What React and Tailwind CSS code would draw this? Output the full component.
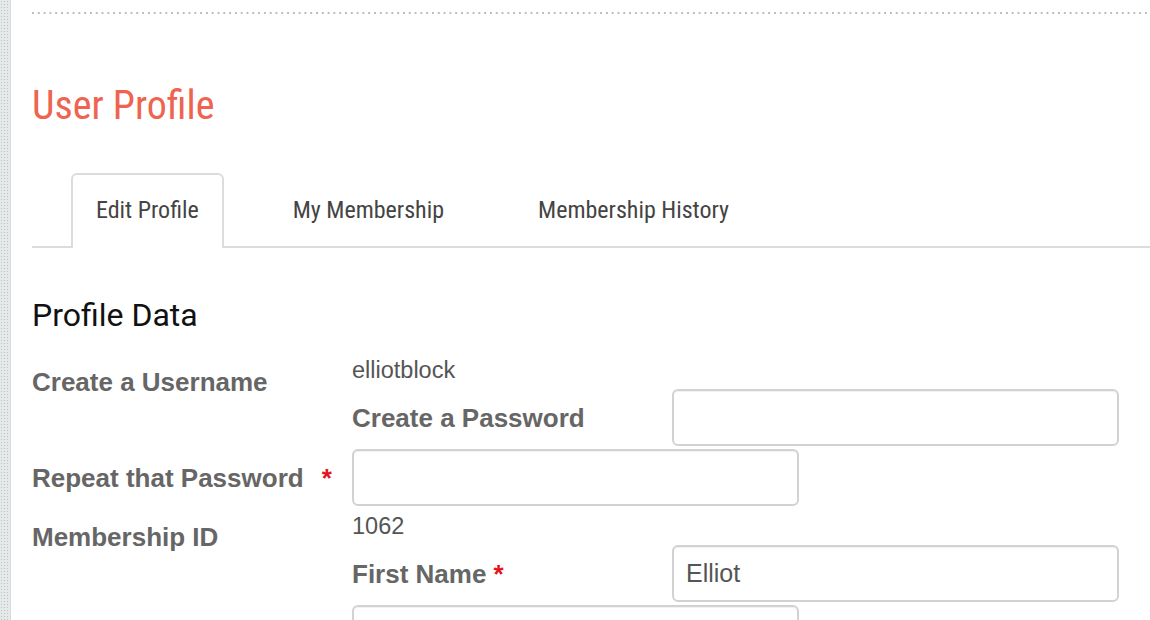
import React from "react";

const labelCls = "text-[26px] font-bold leading-[30px] text-[#666]";
const inputCls =
  "w-[447px] h-[57px] shrink-0 rounded-[6px] border-2 border-[#d2d2d2] bg-white px-[12px] text-[25px] text-[#555] outline-none shadow-[inset_0_1px_1px_rgba(0,0,0,0.06)]";

function Req({ className = "" }) {
  return <span className={"text-[#e4141b] " + className}>*</span>;
}

function Tab({ label, active }) {
  return (
    <div
      className={
        "h-[75px] -mb-[2px] px-[23px] pb-[3px] flex items-center border-2 border-b-0 rounded-t-[6px] text-[24px] text-[#444] " +
        (active ? "border-[#dcdcdc] bg-white" : "border-transparent")
      }
    >
      {label}
    </div>
  );
}

export default function App() {
  return (
    <div
      className="min-h-[620px] flex bg-white"
      style={{ fontFamily: '"Liberation Sans", Arial, sans-serif' }}
    >
      <div className="w-[11px] shrink-0 bg-[#e4e9e9] bg-[radial-gradient(#b9c1c1_0.9px,transparent_1px)] bg-[length:3px_3px] border-r border-[#d6dbdb]" />

      <div className="flex-1 pl-[21px] pt-[12px]">
        <div className="h-[2px] bg-[linear-gradient(to_right,#bcbcbc_2px,transparent_2px)] bg-[length:5.8px_2px]" />

        <h1 className="mt-[72px] text-[40px] leading-[40px] text-[#ee6450] font-['Roboto_Condensed',Roboto,sans-serif]">
          User Profile
        </h1>

        <div className="mt-[47px] flex items-end gap-[44px] pl-[39px] border-b-2 border-[#dcdcdc] font-['Roboto_Condensed',Roboto,sans-serif]">
          <Tab label="Edit Profile" active />
          <Tab label="My Membership" />
          <Tab label="Membership History" />
        </div>

        <h2 className="mt-[47px] text-[32px] leading-[40px] text-[#111] font-['Roboto',sans-serif]">
          Profile Data
        </h2>

        <form className="mt-[22px]">
          <div className="flex">
            <div className={"w-[320px] shrink-0 pt-[10px] " + labelCls}>
              Create a Username
            </div>
            <div className="flex flex-col">
              <div className="h-[32px] text-[23.5px] leading-[26px] text-[#555]">
                elliotblock
              </div>
              <div className="flex items-center">
                <label className={"w-[320px] shrink-0 " + labelCls}>
                  Create a Password
                </label>
                <input type="password" className={inputCls} />
              </div>
            </div>
          </div>

          <div className="mt-[3px] flex items-center">
            <label className={"w-[320px] shrink-0 " + labelCls}>
              Repeat that Password
              <Req className="ml-[18px]" />
            </label>
            <input type="password" className={inputCls} />
          </div>

          <div className="mt-[7px] flex">
            <div className={"w-[320px] shrink-0 pt-[9px] " + labelCls}>
              Membership ID
            </div>
            <div className="flex flex-col">
              <div className="h-[32px] text-[23.5px] leading-[26px] text-[#555]">
                1062
              </div>
              <div className="flex items-center">
                <label className={"w-[320px] shrink-0 " + labelCls}>
                  First Name <Req />
                </label>
                <input type="text" defaultValue="Elliot" className={inputCls} />
              </div>
              <input type="text" className={"mt-[3px] " + inputCls} />
            </div>
          </div>
        </form>
      </div>
    </div>
  );
}
